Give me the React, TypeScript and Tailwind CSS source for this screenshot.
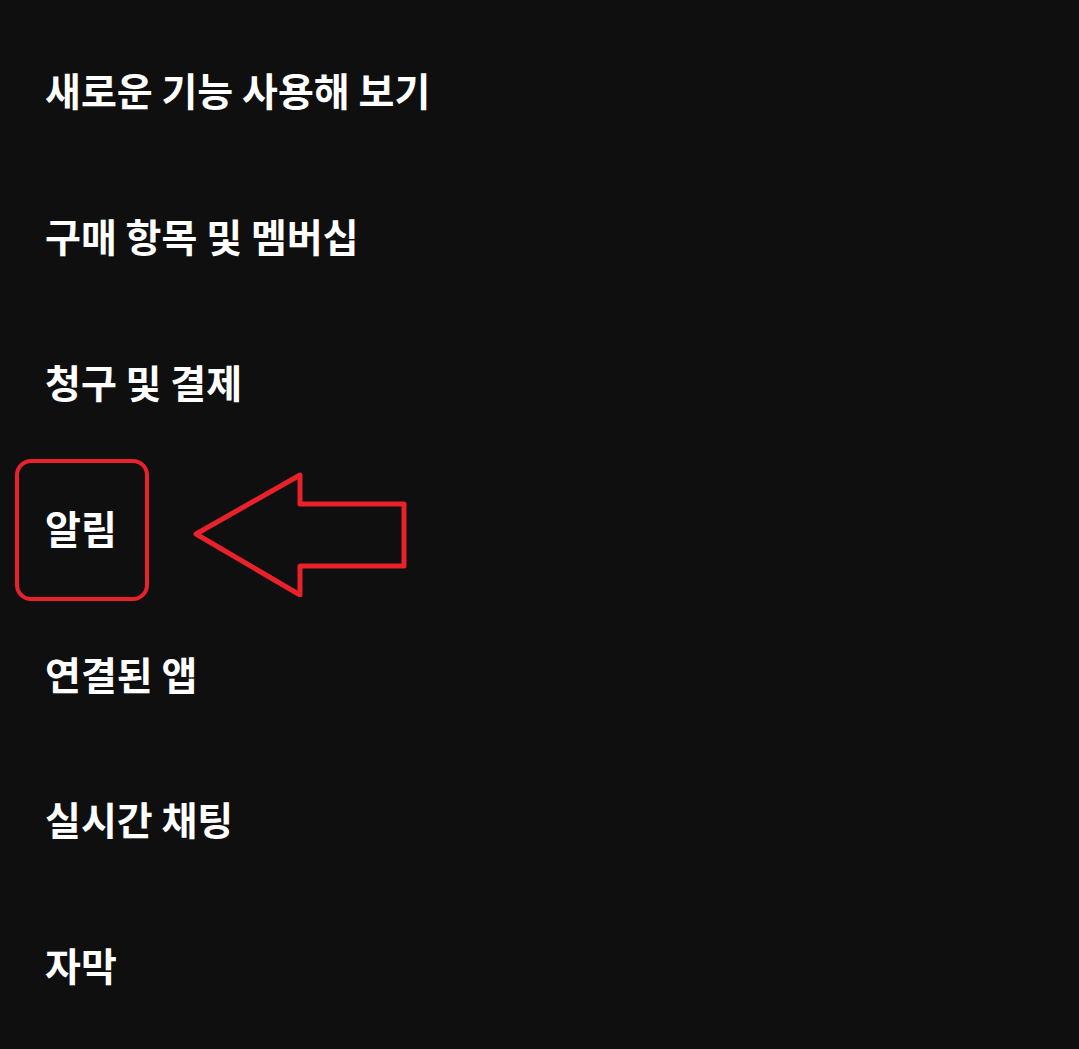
import React from 'react'

const items = [
  '새로운 기능 사용해 보기',
  '구매 항목 및 멤버십',
  '청구 및 결제',
  '알림',
  '연결된 앱',
  '실시간 채팅',
  '자막',
]

export default function App() {
  return (
    <main
      className="relative w-[1079px] h-[1049px] overflow-hidden bg-[#0f0f0f] pt-[17px]"
      style={{ fontFamily: '"Noto Sans CJK KR", "Noto Sans", sans-serif' }}
    >
      <ul className="flex flex-col">
        {items.map((label) => (
          <li key={label} className="relative flex h-[145.8px] items-center pl-[45px]">
            <span className="text-[39px] font-bold leading-none text-white">{label}</span>
            {label === '알림' && (
              <>
                {/* highlight box */}
                <div className="absolute left-[15px] top-[5px] h-[142px] w-[134px] rounded-[16px] border-[4px] border-[#e8212b]" />
                {/* pointer arrow */}
                <svg
                  className="absolute left-[190px] top-[8px]"
                  width="220"
                  height="135"
                  viewBox="190 460 220 135"
                  fill="none"
                >
                  <polygon
                    points="196,532 300,473 300,502 404,502 404,564 300,564 300,593"
                    stroke="#e8212b"
                    strokeWidth="5"
                    strokeLinejoin="round"
                  />
                </svg>
              </>
            )}
          </li>
        ))}
      </ul>
    </main>
  )
}
